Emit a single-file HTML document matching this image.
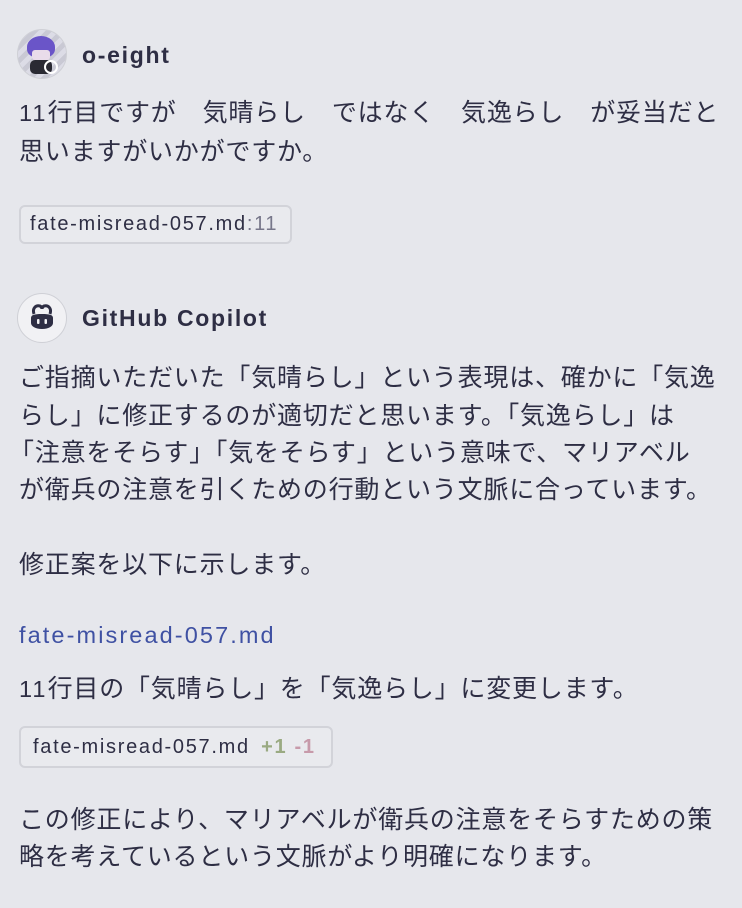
<!DOCTYPE html>
<html><head><meta charset="utf-8"><style>
html,body{margin:0;padding:0;}
body{width:742px;height:908px;background:#e6e7ec;color:#2e2e44;font-family:"Liberation Sans","Noto Sans CJK JP",sans-serif;position:relative;overflow:hidden;}
.a{position:absolute;white-space:nowrap;}
.t{font-size:25px;line-height:38px;left:19px;letter-spacing:0.8px;}
.l{font-size:23.5px;letter-spacing:2.1px;}
.name{font-weight:bold;font-size:23px;left:82px;letter-spacing:1.7px;}
.av{position:absolute;left:17px;width:48px;height:48px;border-radius:50%;border:1px solid #cfd0d6;}
.chip{position:absolute;left:19px;border:2px solid #d2d3d9;border-radius:6px;background:#e9eaee;font-size:20px;box-sizing:border-box;padding-left:9px;white-space:nowrap;letter-spacing:1.7px;}
.g{display:inline-block;width:26px;}
</style></head><body>
<div class="av" style="top:29px;background:repeating-linear-gradient(135deg,#c9c9d4 0 5px,#dcdce6 5px 10px);overflow:hidden">
<div style="position:absolute;left:9px;top:6px;width:28px;height:22px;border-radius:50% 50% 40% 40%;background:#6a55c8"></div>
<div style="position:absolute;left:14px;top:20px;width:18px;height:10px;background:#e9dcea;border-radius:3px"></div>
<div style="position:absolute;left:12px;top:30px;width:22px;height:14px;background:#2a2a33;border-radius:5px"></div>
<div style="position:absolute;left:26px;top:30px;width:10px;height:10px;border:2px solid #fff;border-radius:50%"></div>
</div>
<div class="a name" style="top:40px;line-height:30px">o-eight</div>
<div class="a t" style="top:94px"><span class="l">11</span>行目ですが<span class="g"></span>気晴らし<span class="g"></span>ではなく<span class="g"></span>気逸らし<span class="g"></span>が妥当だと</div>
<div class="a t" style="top:133px">思いますがいかがですか。</div>
<div class="chip" style="top:205px;width:273px;height:39px;line-height:35px">fate-misread-057.md<span style="color:#77778a">:11</span></div>
<div class="av" style="top:293px;background:#f1f1f4">
<svg width="48" height="48" viewBox="0 0 48 48" style="position:absolute;left:0;top:0">
<path d="M16 20c-2-6 2-9 6-8 2 1 2 3 2 3s0-2 2-3c4-1 8 2 6 8" fill="none" stroke="#2e2e44" stroke-width="3"/>
<path d="M13 24c0-3 3-4 11-4s11 1 11 4v5c0 3-4 6-11 6s-11-3-11-6z" fill="#2e2e44"/>
<rect x="19" y="25" width="2.5" height="5" rx="1" fill="#f1f1f4"/><rect x="26.5" y="25" width="2.5" height="5" rx="1" fill="#f1f1f4"/>
</svg></div>
<div class="a name" style="top:303px;line-height:30px">GitHub Copilot</div>
<div class="a t" style="top:359px">ご指摘いただいた「気晴らし」という表現は、確かに「気逸</div>
<div class="a t" style="top:397px">らし」に修正するのが適切だと思います。「気逸らし」は</div>
<div class="a t" style="top:434px;left:9px">「注意をそらす」「気をそらす」という意味で、マリアベル</div>
<div class="a t" style="top:471px">が衛兵の注意を引くための行動という文脈に合っています。</div>
<div class="a t" style="top:546px">修正案を以下に示します。</div>
<div class="a t l" style="top:616px;color:#3f51a3">fate-misread-057.md</div>
<div class="a t" style="top:670px"><span class="l">11</span>行目の「気晴らし」を「気逸らし」に変更します。</div>
<div class="chip" style="top:726px;width:314px;height:42px;line-height:38px;padding-left:12px">fate-misread-057.md <span style="color:#9aaa82;font-weight:bold;margin-left:4px">+1</span> <span style="color:#c79aaa;font-weight:bold">-1</span></div>
<div class="a t" style="top:801px">この修正により、マリアベルが衛兵の注意をそらすための策</div>
<div class="a t" style="top:838px">略を考えているという文脈がより明確になります。</div>
</body></html>
